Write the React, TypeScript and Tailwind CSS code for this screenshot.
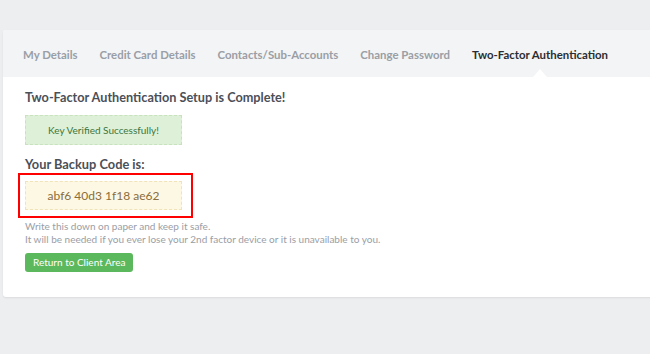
export default function App() {
  const tabs = [
    'My Details',
    'Credit Card Details',
    'Contacts/Sub-Accounts',
    'Change Password',
    'Two-Factor Authentication',
  ];

  return (
    <div className="min-h-[354px] w-[650px] overflow-hidden bg-[#edeef0] pt-[30px] pl-[3px] font-['Lato',sans-serif]">
      <div className="w-[660px] rounded-[3px] bg-white shadow-[0_1px_2px_rgba(0,0,0,0.08)]">
        {/* tabs */}
        <div className="flex h-[47px] items-stretch gap-[22px] rounded-t-[3px] bg-[#f3f4f5] pt-[3px] pl-[20px]">
          {tabs.map((tab, i) => {
            const active = i === tabs.length - 1;
            return (
              <div
                key={tab}
                className={
                  active
                    ? 'relative flex items-center text-[11.4px] font-bold text-[#2a2d33]'
                    : 'relative flex items-center text-[11.4px] font-bold text-[#9a9ea6]'
                }
              >
                {tab}
                {active && (
                  <span className="absolute bottom-0 left-1/2 h-0 w-0 -translate-x-1/2 border-x-[7px] border-b-[8px] border-x-transparent border-b-white" />
                )}
              </div>
            );
          })}
        </div>

        {/* body */}
        <div className="px-[22px] pt-[11px] pb-[25px]">
          <h2 className="text-[12.7px] font-bold leading-[18px] text-[#4b4f58]">
            Two-Factor Authentication Setup is Complete!
          </h2>

          <div className="mt-[9px] flex h-[30px] w-[157px] items-center justify-center border border-dashed border-[#c9e2bd] bg-[#dff0d8] text-[10px] text-[#3c763d]">
            Key Verified Successfully!
          </div>

          <h3 className="mt-[10px] text-[12.8px] font-bold leading-[18px] text-[#4b4f58]">
            Your Backup Code is:
          </h3>

          <div className="-ml-[7px] mt-0 w-[175px] border-2 border-[#ff0000] px-[5px] py-[6px]">
            <div className="flex h-[29px] w-[157px] items-center justify-center border border-dashed border-[#f0e3b8] bg-[#fcf8e3] text-[12px] text-[#8a6d3b]">
              abf6 40d3 1f18 ae62
            </div>
          </div>

          <p className="mt-[2px] text-[10px] leading-[13px] text-[#9a9ea6]">
            Write this down on paper and keep it safe.
            <br />
            It will be needed if you ever lose your 2nd factor device or it is unavailable to you.
          </p>

          <button className="mt-[7px] h-[19px] rounded-[3px] bg-[#5cb85c] px-[8px] text-[10px] leading-[19px] text-white">
            Return to Client Area
          </button>
        </div>
      </div>
    </div>
  );
}
